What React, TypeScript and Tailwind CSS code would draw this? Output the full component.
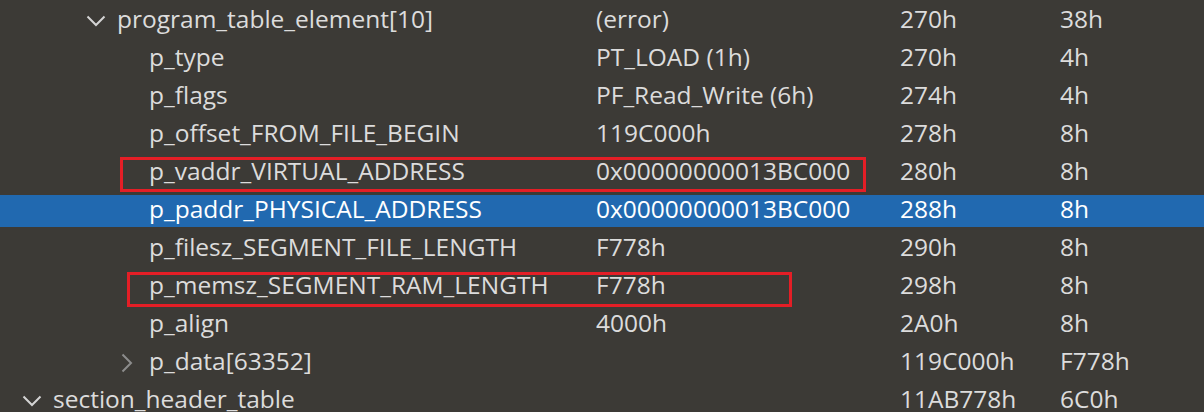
import React from 'react';

type Row = {
  name: string;
  value: string;
  offset: string;
  size: string;
  indent: number;
  chevron?: 'open' | 'closed';
  selected?: boolean;
  box?: 'vaddr' | 'memsz';
};

const rows: Row[] = [
  { name: 'program_table_element[10]', value: '(error)', offset: '270h', size: '38h', indent: 117, chevron: 'open' },
  { name: 'p_type', value: 'PT_LOAD (1h)', offset: '270h', size: '4h', indent: 149 },
  { name: 'p_flags', value: 'PF_Read_Write (6h)', offset: '274h', size: '4h', indent: 149 },
  { name: 'p_offset_FROM_FILE_BEGIN', value: '119C000h', offset: '278h', size: '8h', indent: 149 },
  { name: 'p_vaddr_VIRTUAL_ADDRESS', value: '0x00000000013BC000', offset: '280h', size: '8h', indent: 149, box: 'vaddr' },
  { name: 'p_paddr_PHYSICAL_ADDRESS', value: '0x00000000013BC000', offset: '288h', size: '8h', indent: 149, selected: true },
  { name: 'p_filesz_SEGMENT_FILE_LENGTH', value: 'F778h', offset: '290h', size: '8h', indent: 149 },
  { name: 'p_memsz_SEGMENT_RAM_LENGTH', value: 'F778h', offset: '298h', size: '8h', indent: 149, box: 'memsz' },
  { name: 'p_align', value: '4000h', offset: '2A0h', size: '8h', indent: 149 },
  { name: 'p_data[63352]', value: '', offset: '119C000h', size: 'F778h', indent: 149, chevron: 'closed' },
  { name: 'section_header_table', value: '', offset: '11AB778h', size: '6C0h', indent: 53, chevron: 'open' },
];

function Chevron({ kind }: { kind: 'open' | 'closed' }) {
  if (kind === 'open') {
    return (
      <svg width="20" height="12" viewBox="0 0 20 12" className="text-[#d4d4d4]">
        <polyline points="1.5,1.5 10,10 18.5,1.5" fill="none" stroke="currentColor" strokeWidth="2" />
      </svg>
    );
  }
  return (
    <svg width="12" height="20" viewBox="0 0 12 20" className="text-[#8c8c8c]">
      <polyline points="1.5,1.5 10,10 1.5,18.5" fill="none" stroke="currentColor" strokeWidth="2" />
    </svg>
  );
}

export default function App() {
  return (
    <div
      className="w-[1204px] h-[412px] overflow-hidden bg-[#3c3a36] pt-px text-[#dcdcdc] text-[24.5px]"
      style={{ fontFamily: '"Open Sans", "Noto Sans", sans-serif' }}
    >
      {rows.map((row, i) => (
        <div key={i} className="relative h-[38px] pt-[4px] pb-[2px]">
          <div className={`h-full flex items-center whitespace-nowrap ${row.selected ? 'bg-[#2169b0] text-white' : ''}`}>
            <div className="w-[596px] relative flex items-center shrink-0" style={{ paddingLeft: row.indent }}>
              {row.chevron === 'open' && (
                <div className="absolute top-1/2 -translate-y-1/2" style={{ left: row.indent - 31 }}>
                  <Chevron kind="open" />
                </div>
              )}
              {row.chevron === 'closed' && (
                <div className="absolute top-1/2 -translate-y-1/2" style={{ left: row.indent - 28 }}>
                  <Chevron kind="closed" />
                </div>
              )}
              <span className="leading-none -mt-[3px]">{row.name}</span>
            </div>
            <div className="w-[304px] shrink-0 leading-none -mt-[3px]">{row.value}</div>
            <div className="w-[160px] shrink-0 leading-none -mt-[3px]">{row.offset}</div>
            <div className="flex-1 leading-none -mt-[3px]">{row.size}</div>
          </div>
          {row.box === 'vaddr' && (
            <div className="absolute left-[120px] top-[4px] w-[746px] h-[35px] border-[3px] border-[#e41e26]" />
          )}
          {row.box === 'memsz' && (
            <div className="absolute left-[127px] top-[5px] w-[665px] h-[35px] border-[3px] border-[#e41e26]" />
          )}
        </div>
      ))}
    </div>
  );
}
